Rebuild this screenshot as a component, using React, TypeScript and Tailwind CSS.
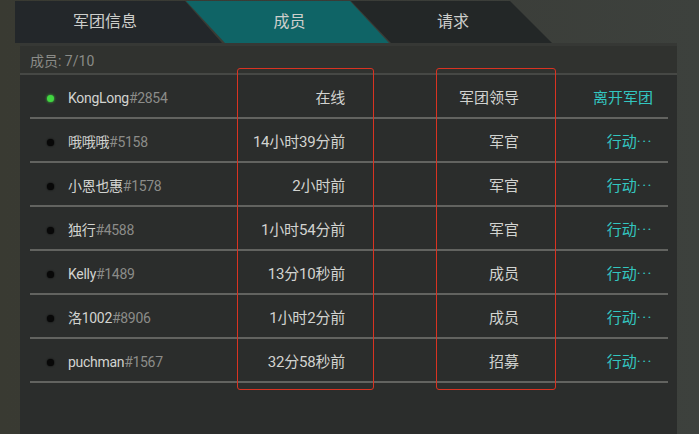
import React from 'react'

type Member = {
  name: string
  tag: string
  seen: string
  role: string
  action: string
  online?: boolean
}

const members: Member[] = [
  { name: 'KongLong', tag: '#2854', seen: '在线', role: '军团领导', action: '离开军团', online: true },
  { name: '哦哦哦', tag: '#5158', seen: '14小时39分前', role: '军官', action: '行动···' },
  { name: '小恩也惠', tag: '#1578', seen: '2小时前', role: '军官', action: '行动···' },
  { name: '独行', tag: '#4588', seen: '1小时54分前', role: '军官', action: '行动···' },
  { name: 'Kelly', tag: '#1489', seen: '13分10秒前', role: '成员', action: '行动···' },
  { name: '洛1002', tag: '#8906', seen: '1小时2分前', role: '成员', action: '行动···' },
  { name: 'puchman', tag: '#1567', seen: '32分58秒前', role: '招募', action: '行动···' },
]

function MemberRow({ m }: { m: Member }) {
  const isAction = m.action.endsWith('···')
  return (
    <div className="ml-[10px] mr-[9px] grid h-[44px] grid-cols-[215px_100px_174px_134px] items-center border-b-2 border-[#626360] pr-[15px] pt-[4px] text-[15px]">
      <div className="flex items-center gap-[14px] pl-[17px]">
        {m.online ? (
          <span className="h-[7px] w-[7px] rounded-full bg-[#41d641] shadow-[0_0_3px_#41d641]" />
        ) : (
          <span className="h-[7px] w-[7px] rounded-full bg-[#080808] shadow-[0_0_2px_#000]" />
        )}
        <span className="whitespace-nowrap text-[14px] tracking-[-0.3px] text-[#d2d3d0]">
          {m.name}
          <span className="text-[#8b8c89]">{m.tag}</span>
        </span>
      </div>
      <div className="whitespace-nowrap text-right tracking-[-0.2px] text-[#d2d3d0]">{m.seen}</div>
      <div className="whitespace-nowrap text-right text-[#d2d3d0]">{m.role}</div>
      <div className="whitespace-nowrap text-right text-[#33c6c0]">
        {isAction ? (
          <>
            行动<span className="tracking-[1.5px]">···</span>
          </>
        ) : (
          m.action
        )}
      </div>
    </div>
  )
}

export default function App() {
  return (
    <div
      className="flex h-[434px] w-[699px] flex-col overflow-hidden bg-[linear-gradient(90deg,#393a32_0%,#3a3c37_50%,#3d413d_100%)] pl-[15px]"
      style={{ fontFamily: 'Roboto, "Noto Sans CJK SC", sans-serif' }}
    >
      {/* tabs */}
      <div className="flex h-[43px] shrink-0 pt-[1px] text-[16px] text-[#cdcecb]">
        <div className="flex w-[208px] items-center bg-[#23272a] pl-[58px] [clip-path:polygon(0_0,170px_0,207px_100%,0_100%)]">
          军团信息
        </div>
        <div className="-ml-[38px] flex w-[205px] items-center justify-center bg-[#0f6466] pl-[4px] [clip-path:polygon(1px_0,165px_0,204px_100%,40px_100%)]">
          成员
        </div>
        <div className="-ml-[40px] flex w-[202px] items-center justify-center bg-[#232727] pl-[4px] [clip-path:polygon(1px_0,160px_0,202px_100%,41px_100%)]">
          请求
        </div>
      </div>

      {/* body */}
      <div className="relative ml-[5px] w-[657px] flex-1 bg-[#2b2d2c]">
        <div className="border-t-[3px] border-[#363835] bg-[#30322f]">
          <div className="flex h-[29px] items-center border-b-2 border-[#464845] pl-[10px] pt-[4px] text-[14px] text-[#8a8b87]">
            成员: 7/10
          </div>
        </div>
        <div>
          {members.map((m) => (
            <MemberRow key={m.tag} m={m} />
          ))}
        </div>

        {/* annotation boxes */}
        <div className="pointer-events-none absolute left-[217px] top-[25px] h-[322px] w-[137px] rounded-[3px] border border-[#d93322]" />
        <div className="pointer-events-none absolute left-[416px] top-[25px] h-[322px] w-[120px] rounded-[3px] border border-[#d93322]" />
      </div>
    </div>
  )
}
